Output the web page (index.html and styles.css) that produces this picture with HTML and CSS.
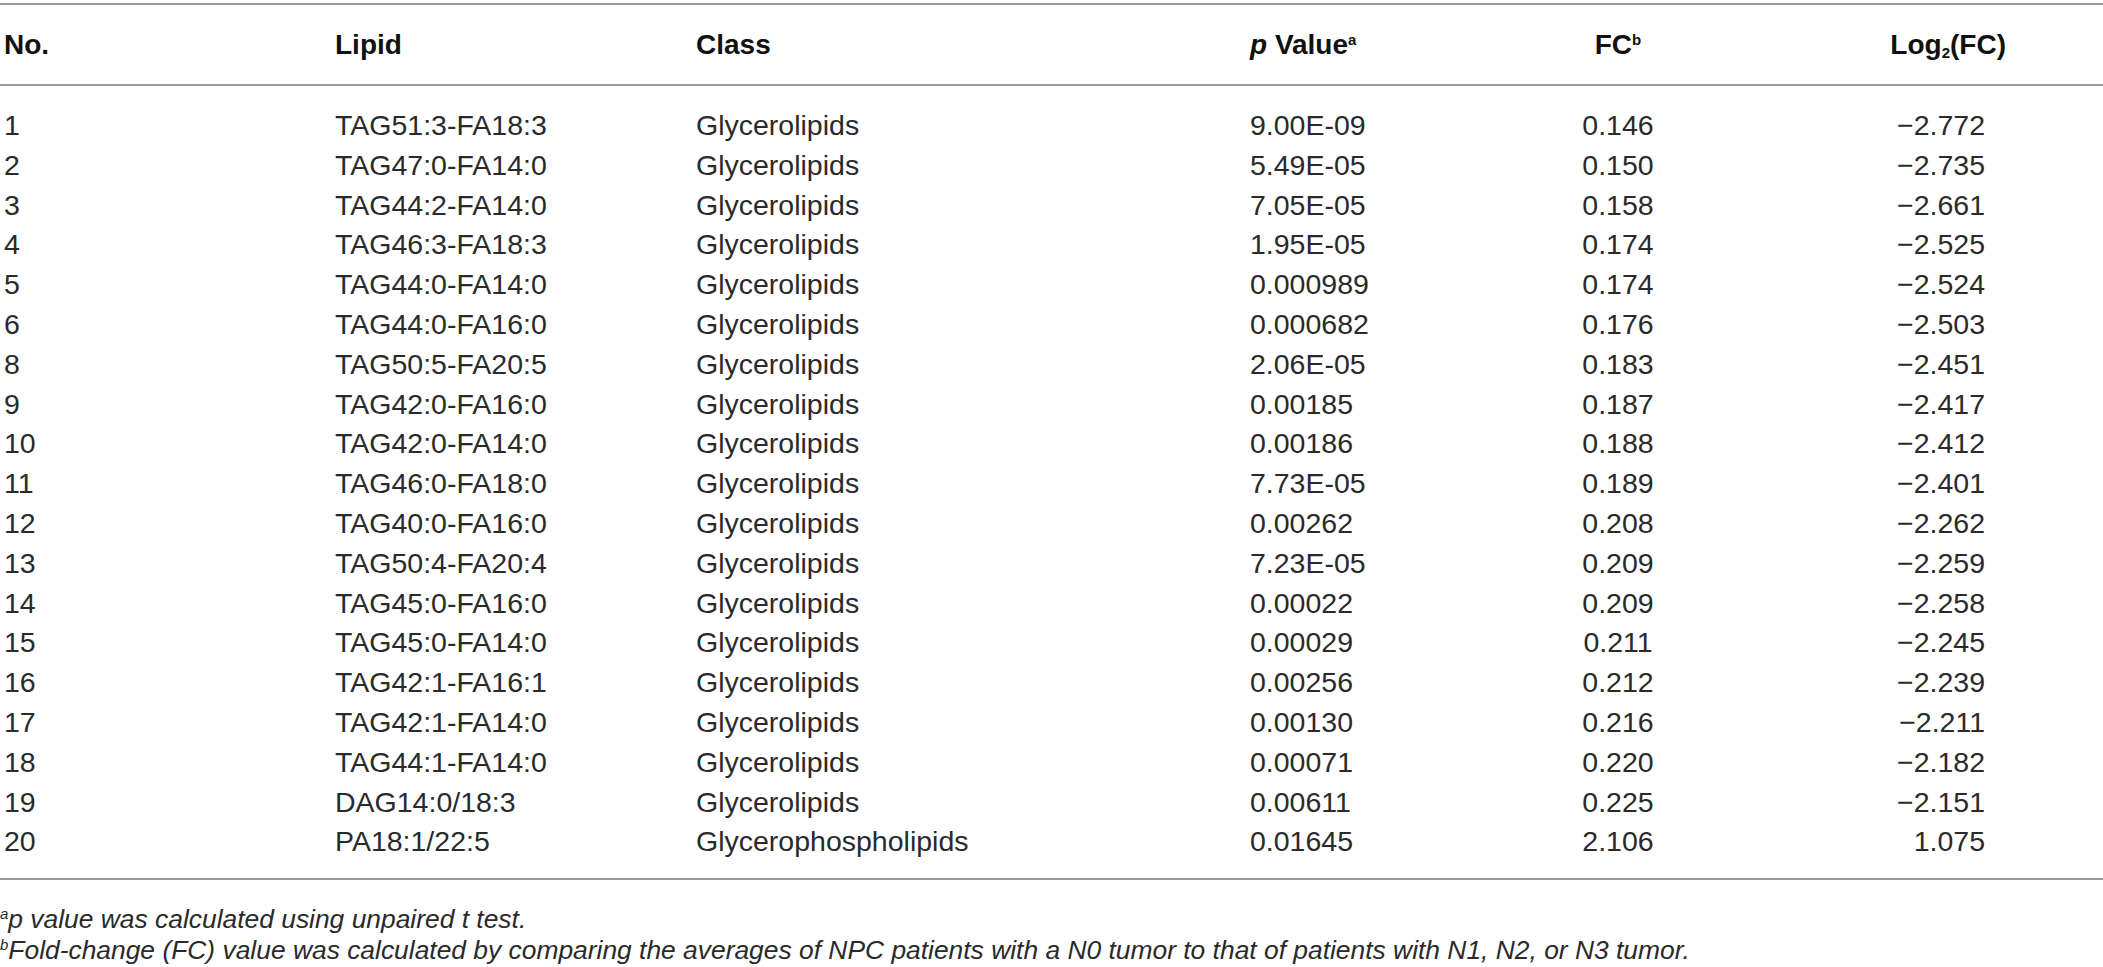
FILE: index.html
```html
<!DOCTYPE html>
<html lang="en">
<head>
<meta charset="utf-8">
<title>Lipids table</title>
<link rel="stylesheet" href="styles.css">
</head>
<body>
<div class="page">
<table class="data">
  <colgroup>
    <col class="c-no">
    <col class="c-lipid">
    <col class="c-class">
    <col class="c-p">
    <col class="c-fc">
    <col class="c-log">
  </colgroup>
  <thead>
    <tr>
      <th class="l first">No.</th>
      <th class="l">Lipid</th>
      <th class="l">Class</th>
      <th class="l"><i>p</i> Value<sup>a</sup></th>
      <th class="c">FC<sup>b</sup></th>
      <th class="c log-h">Log<sub>2</sub>(FC)</th>
    </tr>
  </thead>
  <tbody>
    <tr><td class="first">1</td><td>TAG51:3-FA18:3</td><td>Glycerolipids</td><td>9.00E-09</td><td class="c">0.146</td><td class="r">−2.772</td></tr>
    <tr><td class="first">2</td><td>TAG47:0-FA14:0</td><td>Glycerolipids</td><td>5.49E-05</td><td class="c">0.150</td><td class="r">−2.735</td></tr>
    <tr><td class="first">3</td><td>TAG44:2-FA14:0</td><td>Glycerolipids</td><td>7.05E-05</td><td class="c">0.158</td><td class="r">−2.661</td></tr>
    <tr><td class="first">4</td><td>TAG46:3-FA18:3</td><td>Glycerolipids</td><td>1.95E-05</td><td class="c">0.174</td><td class="r">−2.525</td></tr>
    <tr><td class="first">5</td><td>TAG44:0-FA14:0</td><td>Glycerolipids</td><td>0.000989</td><td class="c">0.174</td><td class="r">−2.524</td></tr>
    <tr><td class="first">6</td><td>TAG44:0-FA16:0</td><td>Glycerolipids</td><td>0.000682</td><td class="c">0.176</td><td class="r">−2.503</td></tr>
    <tr><td class="first">8</td><td>TAG50:5-FA20:5</td><td>Glycerolipids</td><td>2.06E-05</td><td class="c">0.183</td><td class="r">−2.451</td></tr>
    <tr><td class="first">9</td><td>TAG42:0-FA16:0</td><td>Glycerolipids</td><td>0.00185</td><td class="c">0.187</td><td class="r">−2.417</td></tr>
    <tr><td class="first">10</td><td>TAG42:0-FA14:0</td><td>Glycerolipids</td><td>0.00186</td><td class="c">0.188</td><td class="r">−2.412</td></tr>
    <tr><td class="first">11</td><td>TAG46:0-FA18:0</td><td>Glycerolipids</td><td>7.73E-05</td><td class="c">0.189</td><td class="r">−2.401</td></tr>
    <tr><td class="first">12</td><td>TAG40:0-FA16:0</td><td>Glycerolipids</td><td>0.00262</td><td class="c">0.208</td><td class="r">−2.262</td></tr>
    <tr><td class="first">13</td><td>TAG50:4-FA20:4</td><td>Glycerolipids</td><td>7.23E-05</td><td class="c">0.209</td><td class="r">−2.259</td></tr>
    <tr><td class="first">14</td><td>TAG45:0-FA16:0</td><td>Glycerolipids</td><td>0.00022</td><td class="c">0.209</td><td class="r">−2.258</td></tr>
    <tr><td class="first">15</td><td>TAG45:0-FA14:0</td><td>Glycerolipids</td><td>0.00029</td><td class="c">0.211</td><td class="r">−2.245</td></tr>
    <tr><td class="first">16</td><td>TAG42:1-FA16:1</td><td>Glycerolipids</td><td>0.00256</td><td class="c">0.212</td><td class="r">−2.239</td></tr>
    <tr><td class="first">17</td><td>TAG42:1-FA14:0</td><td>Glycerolipids</td><td>0.00130</td><td class="c">0.216</td><td class="r">−2.211</td></tr>
    <tr><td class="first">18</td><td>TAG44:1-FA14:0</td><td>Glycerolipids</td><td>0.00071</td><td class="c">0.220</td><td class="r">−2.182</td></tr>
    <tr><td class="first">19</td><td>DAG14:0/18:3</td><td>Glycerolipids</td><td>0.00611</td><td class="c">0.225</td><td class="r">−2.151</td></tr>
    <tr><td class="first">20</td><td>PA18:1/22:5</td><td>Glycerophospholipids</td><td>0.01645</td><td class="c">2.106</td><td class="r">1.075</td></tr>
  </tbody>
</table>
<div class="notes">
  <p class="note"><sup>a</sup>p value was calculated using unpaired t test.</p>
  <p class="note"><sup>b</sup>Fold-change (FC) value was calculated by comparing the averages of NPC patients with a N0 tumor to that of patients with N1, N2, or N3 tumor.</p>
</div>
</div>
</body>
</html>
```

FILE: styles.css
```css
html, body {
  margin: 0;
  padding: 0;
  background: #ffffff;
}

.page {
  padding-top: 3px;
  font-family: "Liberation Sans", Arial, sans-serif;
  color: #2a2a2a;
}

.data {
  width: 100%;
  border-collapse: collapse;
  table-layout: fixed;
}

.c-no { width: 335px; }
.c-lipid { width: 361px; }
.c-class { width: 554px; }
.c-p { width: 250px; }
.c-fc { width: 236px; }
.c-log { width: auto; }

.data thead tr {
  border-top: 2px solid #9a9a9a;
  border-bottom: 2px solid #9a9a9a;
}

.data th {
  font-weight: 700;
  font-size: 28px;
  letter-spacing: 0;
  color: #111;
  height: 79px;
  padding: 0;
  vertical-align: middle;
  white-space: nowrap;
}

.data th sup {
  font-size: 15px;
  vertical-align: 9px;
  line-height: 0;
}

.data th sub {
  font-size: 15px;
  vertical-align: -4px;
  line-height: 0;
}

.data th.l { text-align: left; }
.data th.c { text-align: center; }
.data th.log-h { text-align: right; padding-right: 97px; }

.data th.first,
.data td.first { padding-left: 4px; }

.data tbody tr:last-child {
  border-bottom: 2px solid #9a9a9a;
}

.data td {
  font-size: 28.5px;
  line-height: 39.8px;
  padding: 0;
  white-space: nowrap;
  text-align: left;
}

.data td.c { text-align: center; }
.data td.r { text-align: right; padding-right: 118px; }

.data tbody tr:first-child td { padding-top: 20px; }
.data tbody tr:last-child td { padding-bottom: 16px; }

.notes {
  padding-top: 24px;
}

.note {
  margin: 0;
  font-style: italic;
  font-size: 26.4px;
  line-height: 31px;
  white-space: nowrap;
}

.note sup {
  font-size: 15px;
  vertical-align: 9px;
  line-height: 0;
}
```
